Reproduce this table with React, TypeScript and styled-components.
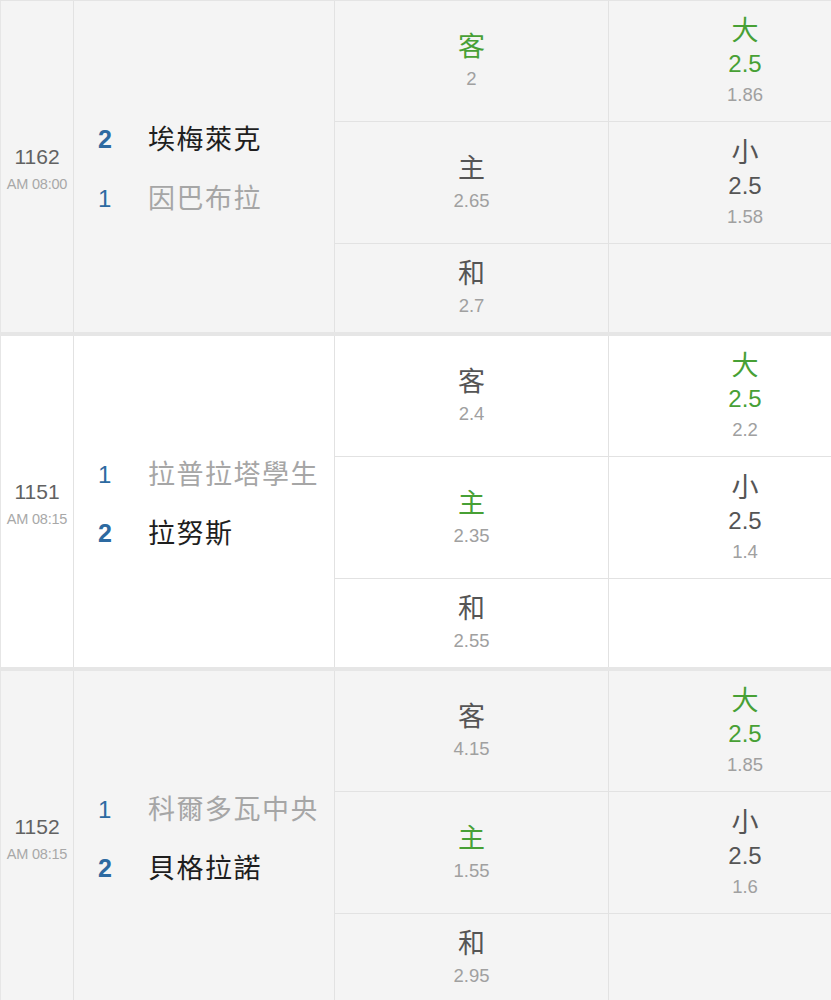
import React from "react";
import styled, { createGlobalStyle } from "styled-components";

const Global = createGlobalStyle`
  html, body { margin: 0; padding: 0; background: #fff; overflow: hidden; }
  body { font-family: "Liberation Sans", "Noto Sans CJK TC", sans-serif; }
`;

const GREEN = "#47a035";

type Pick = { label: string; odds: string; hot?: boolean };
type OU = { label: string; line: string; odds: string; hot?: boolean };
type Team = { score: number; name: string; win?: boolean };
type Match = {
  id: string;
  time: string;
  shaded?: boolean;
  teams: Team[];
  picks: Pick[];
  ou: OU[];
};

const matches: Match[] = [
  {
    id: "1162",
    time: "AM 08:00",
    shaded: true,
    teams: [
      { score: 2, name: "埃梅萊克", win: true },
      { score: 1, name: "因巴布拉" },
    ],
    picks: [
      { label: "客", odds: "2", hot: true },
      { label: "主", odds: "2.65" },
      { label: "和", odds: "2.7" },
    ],
    ou: [
      { label: "大", line: "2.5", odds: "1.86", hot: true },
      { label: "小", line: "2.5", odds: "1.58" },
    ],
  },
  {
    id: "1151",
    time: "AM 08:15",
    teams: [
      { score: 1, name: "拉普拉塔學生" },
      { score: 2, name: "拉努斯", win: true },
    ],
    picks: [
      { label: "客", odds: "2.4" },
      { label: "主", odds: "2.35", hot: true },
      { label: "和", odds: "2.55" },
    ],
    ou: [
      { label: "大", line: "2.5", odds: "2.2", hot: true },
      { label: "小", line: "2.5", odds: "1.4" },
    ],
  },
  {
    id: "1152",
    time: "AM 08:15",
    shaded: true,
    teams: [
      { score: 1, name: "科爾多瓦中央" },
      { score: 2, name: "貝格拉諾", win: true },
    ],
    picks: [
      { label: "客", odds: "4.15" },
      { label: "主", odds: "1.55", hot: true },
      { label: "和", odds: "2.95" },
    ],
    ou: [
      { label: "大", line: "2.5", odds: "1.85", hot: true },
      { label: "小", line: "2.5", odds: "1.6" },
    ],
  },
];

const Table = styled.div`
  width: 882px;
  border-top: 1px solid #e4e4e4;
`;

const MatchBlock = styled.div<{ $shaded?: boolean }>`
  display: grid;
  grid-template-columns: 74px 261px 274px 273px;
  grid-template-rows: 121px 122px 88px;
  background: ${(p) => (p.$shaded ? "#f4f4f4" : "#ffffff")};
  border-bottom: 4px solid #e6e6e6;
`;

const IdCell = styled.div`
  grid-row: 1 / 4;
  grid-column: 1;
  border-left: 1px solid #e6e6e6;
  border-right: 1px solid #e2e2e2;
  display: flex;
  flex-direction: column;
  align-items: center;
  justify-content: center;
  padding-top: 6px;
`;

const MatchId = styled.div`
  font-size: 21px;
  color: #626262;
  line-height: 28px;
`;

const MatchTime = styled.div`
  font-size: 14.5px;
  color: #a8a8a8;
  line-height: 26px;
  letter-spacing: -0.2px;
`;

const TeamsCell = styled.div`
  grid-row: 1 / 4;
  grid-column: 2;
  border-right: 1px solid #e2e2e2;
  display: flex;
  flex-direction: column;
  justify-content: center;
  padding: 0 0 0 24px;
`;

const TeamRow = styled.div`
  display: flex;
  align-items: center;
  height: 59px;
`;

const Score = styled.span<{ $win?: boolean }>`
  width: 50px;
  color: #2d6aa1;
  font-size: ${(p) => (p.$win ? "25px" : "24px")};
  font-weight: ${(p) => (p.$win ? 700 : 400)};
  padding-top: ${(p) => (p.$win ? "4px" : "6px")};
`;

const TeamName = styled.span<{ $win?: boolean }>`
  font-size: 27px;
  letter-spacing: 1.5px;
  color: ${(p) => (p.$win ? "#1e1e1e" : "#a6a6a6")};
`;

const OddsCell = styled.div<{ $col: number; $last?: boolean }>`
  grid-column: ${(p) => p.$col};
  border-right: 1px solid #e2e2e2;
  border-bottom: ${(p) => (p.$last ? "none" : "1px solid #e2e2e2")};
  display: flex;
  flex-direction: column;
  align-items: center;
  justify-content: center;
  padding-top: 2px;
`;

const Label = styled.div<{ $hot?: boolean }>`
  font-size: 27px;
  line-height: 34px;
  color: ${(p) => (p.$hot ? GREEN : "#555")};
`;

const Line = styled.div<{ $hot?: boolean }>`
  font-size: 24px;
  line-height: 32px;
  color: ${(p) => (p.$hot ? GREEN : "#555")};
`;

const Odds = styled.div`
  font-size: 18.5px;
  line-height: 30px;
  color: #a0a0a0;
`;

export default function App() {
  return (
    <>
      <Global />
      <Table>
        {matches.map((m) => (
          <MatchBlock key={m.id} $shaded={m.shaded}>
            <IdCell>
              <MatchId>{m.id}</MatchId>
              <MatchTime>{m.time}</MatchTime>
            </IdCell>
            <TeamsCell>
              {m.teams.map((t) => (
                <TeamRow key={t.name}>
                  <Score $win={t.win}>{t.score}</Score>
                  <TeamName $win={t.win}>{t.name}</TeamName>
                </TeamRow>
              ))}
            </TeamsCell>
            {m.picks.map((p, i) => (
              <OddsCell key={p.label} $col={3} $last={i === 2} style={{ gridRow: i + 1 }}>
                <Label $hot={p.hot}>{p.label}</Label>
                <Odds>{p.odds}</Odds>
              </OddsCell>
            ))}
            {[0, 1, 2].map((i) => {
              const o = m.ou[i];
              return (
                <OddsCell key={i} $col={4} $last={i === 2} style={{ gridRow: i + 1 }}>
                  {o && (
                    <>
                      <Label $hot={o.hot}>{o.label}</Label>
                      <Line $hot={o.hot}>{o.line}</Line>
                      <Odds>{o.odds}</Odds>
                    </>
                  )}
                </OddsCell>
              );
            })}
          </MatchBlock>
        ))}
      </Table>
    </>
  );
}
